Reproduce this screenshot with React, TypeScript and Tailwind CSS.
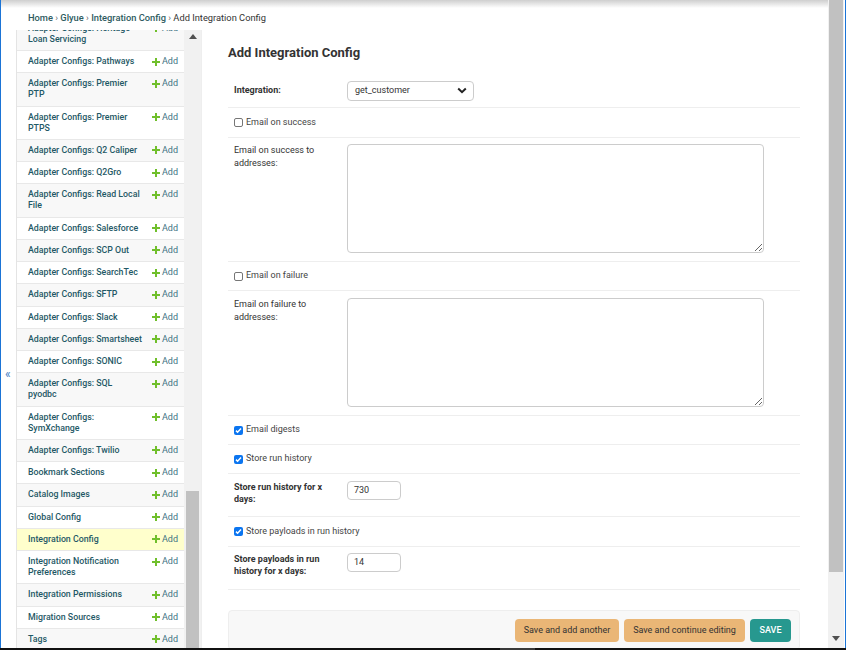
import React from "react";

type Item = { lines: string[]; hl?: boolean };

const items: Item[] = [
  { lines: ["Adapter Configs: Heritage", "Loan Servicing"] },
  { lines: ["Adapter Configs: Pathways"] },
  { lines: ["Adapter Configs: Premier", "PTP"] },
  { lines: ["Adapter Configs: Premier", "PTPS"] },
  { lines: ["Adapter Configs: Q2 Caliper"] },
  { lines: ["Adapter Configs: Q2Gro"] },
  { lines: ["Adapter Configs: Read Local", "File"] },
  { lines: ["Adapter Configs: Salesforce"] },
  { lines: ["Adapter Configs: SCP Out"] },
  { lines: ["Adapter Configs: SearchTec"] },
  { lines: ["Adapter Configs: SFTP"] },
  { lines: ["Adapter Configs: Slack"] },
  { lines: ["Adapter Configs: Smartsheet"] },
  { lines: ["Adapter Configs: SONIC"] },
  { lines: ["Adapter Configs: SQL", "pyodbc"] },
  { lines: ["Adapter Configs:", "SymXchange"] },
  { lines: ["Adapter Configs: Twilio"] },
  { lines: ["Bookmark Sections"] },
  { lines: ["Catalog Images"] },
  { lines: ["Global Config"] },
  { lines: ["Integration Config"], hl: true },
  { lines: ["Integration Notification", "Preferences"] },
  { lines: ["Integration Permissions"] },
  { lines: ["Migration Sources"] },
  { lines: ["Tags"] },
];

function Plus() {
  return (
    <svg width="8" height="8" viewBox="0 0 8 8" className="shrink-0">
      <path d="M3 0h2v3h3v2H5v3H3V5H0V3h3z" fill="#70bf2b" />
    </svg>
  );
}

function Check({ checked }: { checked?: boolean }) {
  if (checked) {
    return (
      <span className="w-[9px] h-[9px] rounded-[2px] bg-[#0b75f0] flex items-center justify-center shrink-0">
        <svg width="7" height="7" viewBox="0 0 7 7">
          <path d="M1 3.6l1.6 1.6L6 1.6" stroke="white" strokeWidth="1.5" fill="none" />
        </svg>
      </span>
    );
  }
  return <span className="w-[9px] h-[9px] rounded-[2px] border border-[#767676] bg-white shrink-0" />;
}

function CheckRow({ label, checked, h }: { label: string; checked?: boolean; h: string }) {
  return (
    <div className={`flex items-center pl-[6px] border-b border-[#eeeeee] ${h}`}>
      <Check checked={checked} />
      <span className="ml-[3px] text-[9px] text-[#444]">{label}</span>
    </div>
  );
}

export default function App() {
  return (
    <div className="w-[846px] h-[650px] flex flex-col bg-white overflow-hidden font-[Roboto,'Liberation_Sans',sans-serif]">
      <div className="flex flex-1 min-h-0">
        <div className="w-px bg-[#1b74d6]" />
        <div className="w-[827px] flex flex-col min-h-0">
          <div className="h-[8px] bg-gradient-to-b from-[#cfcfcf] to-white" />
          <div className="h-[22px] pl-[27px] pt-[4px] text-[9.3px] leading-[12px] text-[#2e5b60] whitespace-nowrap">
            <span className="font-medium">Home</span>
            <span className="text-[#666]"> › </span>
            <span className="font-medium">Glyue</span>
            <span className="text-[#666]"> › </span>
            <span className="font-medium">Integration Config</span>
            <span className="text-[#666]"> › </span>
            <span className="text-[#333]">Add Integration Config</span>
          </div>
          <div className="flex flex-1 min-h-0">
            <div className="w-[15px] pt-[337px] pl-[4px] text-[12px] leading-[14px] text-[#3f7cc4]">«</div>
            <div className="w-[168px] border-l border-[#e4e4e4] overflow-hidden">
              <div className="mt-[-12.2px]">
                {items.map((it, i) => (
                  <div
                    key={i}
                    className={`flex justify-between pl-[11px] pr-[6px] py-[5.14px] border-b border-[#e8e8e8] ${
                      it.hl ? "bg-[#ffffcc]" : i % 2 === 0 ? "bg-[#f8f8f8]" : "bg-white"
                    }`}
                  >
                    <div className="text-[8.8px] leading-[11px] font-medium text-[#1f5966] whitespace-nowrap">
                      {it.lines.map((l, j) => (
                        <div key={j}>{l}</div>
                      ))}
                    </div>
                    <div className="flex items-center gap-[2px] h-[11px] text-[9px] leading-[11px] text-[#417283] whitespace-nowrap">
                      <Plus />
                      <span>Add</span>
                    </div>
                  </div>
                ))}
              </div>
            </div>
            <div className="w-[17px] bg-[#f1f1f1] flex flex-col">
              <div className="h-[17px] flex items-center justify-center">
                <svg width="8" height="5" viewBox="0 0 8 5">
                  <path d="M0 5L4 0l4 5z" fill="#505050" />
                </svg>
              </div>
              <div className="mt-[448px] ml-[2px] w-[13px] h-[200px] bg-[#c1c1c1]" />
            </div>
            <div className="w-px bg-[#eeeeee]" />
            <main className="flex-1 pl-[26px] pr-[28px]">
              <h1 className="h-[44px] flex items-center text-[13px] font-bold text-[#333] leading-none">
                Add Integration Config
              </h1>
              <div className="flex items-center pl-[6px] h-[34px] border-b border-[#eeeeee]">
                <label className="w-[113px] text-[9px] font-bold text-[#333]">Integration:</label>
                <div className="w-[127px] h-[20px] border border-[#cccccc] rounded-[4px] flex items-center justify-between pl-[7px] pr-[6px] text-[9px] text-[#333]">
                  <span>get_customer</span>
                  <svg width="10" height="7" viewBox="0 0 10 7">
                    <path d="M1.2 1.5L5 5.2l3.8-3.7" stroke="#222" strokeWidth="2" fill="none" />
                  </svg>
                </div>
              </div>
              <CheckRow label="Email on success" h="h-[30px]" />
              <div className="flex items-start pl-[6px] pt-[6px] h-[124px] border-b border-[#eeeeee]">
                <label className="w-[113px] text-[9px] leading-[13px] text-[#333]">
                  Email on success to
                  <br />
                  addresses:
                </label>
                <textarea
                  readOnly
                  className="w-[417px] h-[109px] border border-[#cccccc] rounded-[4px] bg-white outline-none"
                />
              </div>
              <CheckRow label="Email on failure" h="h-[29px]" />
              <div className="flex items-start pl-[6px] pt-[7px] h-[125px] border-b border-[#eeeeee]">
                <label className="w-[113px] text-[9px] leading-[13px] text-[#333]">
                  Email on failure to
                  <br />
                  addresses:
                </label>
                <textarea
                  readOnly
                  className="w-[417px] h-[109px] border border-[#cccccc] rounded-[4px] bg-white outline-none"
                />
              </div>
              <CheckRow label="Email digests" checked h="h-[29px]" />
              <CheckRow label="Store run history" checked h="h-[29px]" />
              <div className="flex items-start pl-[6px] pt-[7px] h-[43px] border-b border-[#eeeeee]">
                <label className="w-[113px] text-[9px] leading-[12px] font-bold text-[#333]">
                  Store run history for x
                  <br />
                  days:
                </label>
                <div className="w-[54px] h-[19px] border border-[#cccccc] rounded-[4px] pl-[6px] flex items-center text-[9px] text-[#333]">
                  730
                </div>
              </div>
              <CheckRow label="Store payloads in run history" checked h="h-[30px]" />
              <div className="flex items-start pl-[6px] pt-[6px] h-[43px] border-b border-[#eeeeee]">
                <label className="w-[113px] text-[9px] leading-[12px] font-bold text-[#333]">
                  Store payloads in run
                  <br />
                  history for x days:
                </label>
                <div className="w-[54px] h-[19px] border border-[#cccccc] rounded-[4px] pl-[6px] flex items-center text-[9px] text-[#333]">
                  14
                </div>
              </div>
              <div className="mt-[20px] h-[40px] bg-[#f8f8f8] border border-[#eeeeee] rounded-[4px] flex justify-end items-start pt-[8px] pr-[8px] gap-[5px]">
                <div className="w-[104px] h-[23px] rounded-[4px] bg-[#eab676] flex items-center justify-center text-[9px] text-[#333]">
                  Save and add another
                </div>
                <div className="w-[121px] h-[23px] rounded-[4px] bg-[#eab676] flex items-center justify-center text-[9px] text-[#333]">
                  Save and continue editing
                </div>
                <div className="w-[41px] h-[23px] rounded-[4px] bg-[#27988f] flex items-center justify-center text-[9px] font-medium text-white">
                  SAVE
                </div>
              </div>
            </main>
          </div>
        </div>
        <div className="w-[16px] bg-[#f1f1f1] flex flex-col">
          <div className="ml-[1px] w-[14px] h-[572px] bg-[#c1c1c1]" />
          <div className="flex-1" />
          <div className="h-[19px] flex items-center justify-center">
            <svg width="8" height="5" viewBox="0 0 8 5">
              <path d="M0 0l4 5 4-5z" fill="#505050" />
            </svg>
          </div>
        </div>
        <div className="w-px bg-white" />
        <div className="w-px bg-[#1b74d6]" />
      </div>
      <div className="h-[2px] flex">
        <div className="w-[500px] bg-[#111]" />
        <div className="w-[35px] bg-[#3a3a3a]" />
        <div className="flex-1 bg-[#111]" />
      </div>
    </div>
  );
}
